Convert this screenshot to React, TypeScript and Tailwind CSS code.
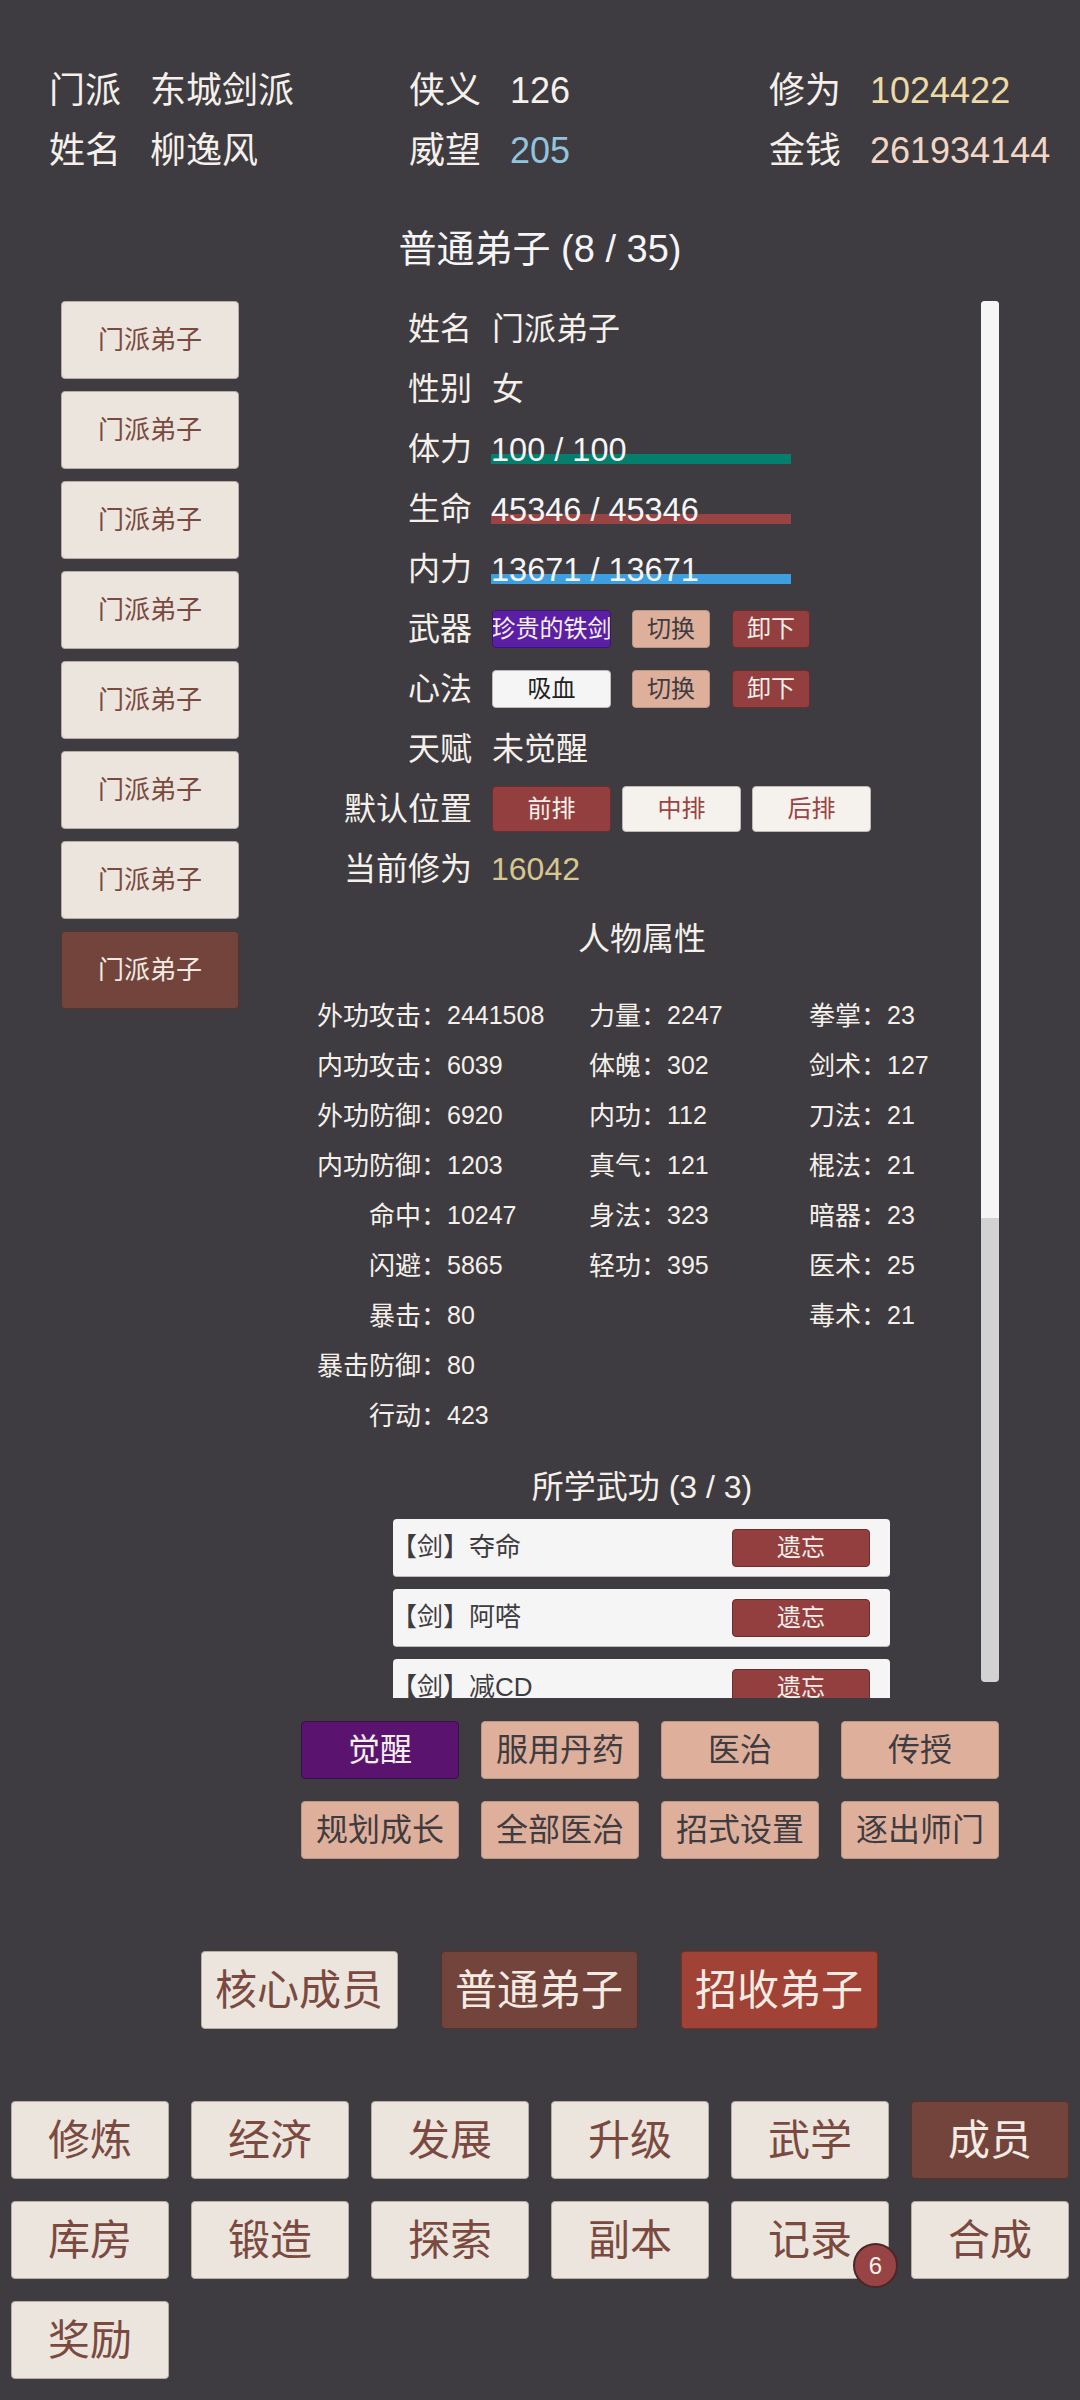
import React from 'react';

const font = { fontFamily: '"Liberation Sans", "Noto Sans CJK SC", sans-serif' };

const HEADER = [
  [
    { label: '门派', value: '东城剑派', color: 'text-[#f5f0ea]' },
    { label: '姓名', value: '柳逸风', color: 'text-[#f5f0ea]' },
  ],
  [
    { label: '侠义', value: '126', color: 'text-[#f5f0ea]' },
    { label: '威望', value: '205', color: 'text-[#93c4de]' },
  ],
  [
    { label: '修为', value: '1024422', color: 'text-[#ecd9a4]' },
    { label: '金钱', value: '261934144', color: 'text-[#f2d5c4]' },
  ],
];

const ATTR_1 = [
  ['外功攻击', '2441508'],
  ['内功攻击', '6039'],
  ['外功防御', '6920'],
  ['内功防御', '1203'],
  ['命中', '10247'],
  ['闪避', '5865'],
  ['暴击', '80'],
  ['暴击防御', '80'],
  ['行动', '423'],
];
const ATTR_2 = [
  ['力量', '2247'],
  ['体魄', '302'],
  ['内功', '112'],
  ['真气', '121'],
  ['身法', '323'],
  ['轻功', '395'],
];
const ATTR_3 = [
  ['拳掌', '23'],
  ['剑术', '127'],
  ['刀法', '21'],
  ['棍法', '21'],
  ['暗器', '23'],
  ['医术', '25'],
  ['毒术', '21'],
];

const NAV = ['修炼', '经济', '发展', '升级', '武学', '成员', '库房', '锻造', '探索', '副本', '记录', '合成', '奖励'];

const Row: React.FC<{ label: string; children: React.ReactNode }> = ({ label, children }) => (
  <div className="flex h-[46px] items-center">
    <div className="w-[232px] shrink-0 text-right text-[32px] text-[#f5f0ea]">{label}</div>
    <div className="ml-[20px] flex items-center">{children}</div>
  </div>
);

const Bar: React.FC<{ text: string; color: string }> = ({ text, color }) => (
  <div className="relative -ml-px h-[46px] w-[300px]">
    <div className={`absolute bottom-[8px] left-0 h-[10px] w-full ${color}`} />
    <div className="absolute top-[3px] left-0 text-[32.5px] leading-[42px] whitespace-nowrap text-[#f5f5f5]">{text}</div>
  </div>
);

const SmallBtn: React.FC<{ className: string; children: React.ReactNode }> = ({ className, children }) => (
  <div className={`flex h-[38px] items-center justify-center rounded-[4px] border text-[24px] whitespace-nowrap ${className}`}>
    {children}
  </div>
);

const AttrCol: React.FC<{ items: string[][]; labelW: string; width: string }> = ({ items, labelW, width }) => (
  <div className={`flex flex-col ${width}`}>
    {items.map(([k, v]) => (
      <div key={k} className="flex h-[50px] items-center text-[26px] whitespace-nowrap text-[#f5f0ea]">
        <div className={`shrink-0 text-right ${labelW}`}>{k}：</div>
        <div className="text-[25px]">{v}</div>
      </div>
    ))}
  </div>
);

const App: React.FC = () => {
  return (
    <div className="flex h-[2400px] w-[1080px] flex-col overflow-hidden bg-[#3e3c41]" style={font}>
      {/* top stats */}
      <div className="flex pt-[61px] pl-[49px]">
        {HEADER.map((col, i) => (
          <div key={i} className={i < 2 ? 'w-[360px]' : ''}>
            {col.map(r => (
              <div key={r.label} className="flex h-[60px] items-center text-[36px] whitespace-nowrap">
                <div className="w-[101px] text-[#f5f0ea]">{r.label}</div>
                <div className={r.color}>{r.value}</div>
              </div>
            ))}
          </div>
        ))}
      </div>

      <div className="mt-[41px] h-[79px] text-center text-[38px] leading-[54px] text-[#f5f5f5]">普通弟子 (8 / 35)</div>

      <div className="flex h-[1397px]">
        {/* disciple list */}
        <div className="ml-[61px] flex w-[178px] shrink-0 flex-col gap-[12px]">
          {Array.from({ length: 8 }).map((_, i) => (
            <div
              key={i}
              className={
                i === 7
                  ? 'flex h-[78px] items-center justify-center rounded-[4px] border border-[#55322c] bg-[#72443b] text-[26px] text-[#f3ebe3]'
                  : 'flex h-[78px] items-center justify-center rounded-[4px] border border-[#b5aca4] bg-[#ebe5de] text-[26px] text-[#7a4a40]'
              }
            >
              门派弟子
            </div>
          ))}
        </div>

        {/* detail panel */}
        <div className="relative ml-px flex-1 overflow-hidden">
          <div className="flex flex-col gap-[14px] pt-[5px]">
            <Row label="姓名"><span className="text-[32px] text-[#f5f0ea]">门派弟子</span></Row>
            <Row label="性别"><span className="text-[32px] text-[#f5f0ea]">女</span></Row>
            <Row label="体力"><Bar text="100 / 100" color="bg-[#047f6e]" /></Row>
            <Row label="生命"><Bar text="45346 / 45346" color="bg-[#994444]" /></Row>
            <Row label="内力"><Bar text="13671 / 13671" color="bg-[#3d9fe0]" /></Row>
            <Row label="武器">
              <SmallBtn className="w-[119px] overflow-hidden border-[#3b1570] bg-[#5b1fa6] text-[#f5f0ea]">珍贵的铁剑</SmallBtn>
              <SmallBtn className="ml-[21px] w-[78px] border-[#b99583] bg-[#deb09b] text-[#3e3c41]">切换</SmallBtn>
              <SmallBtn className="ml-[22px] w-[78px] border-[#6b2d2d] bg-[#943f3f] text-[#f5f0ea]">卸下</SmallBtn>
            </Row>
            <Row label="心法">
              <SmallBtn className="w-[119px] border-[#bbbbbb] bg-[#f5f5f5] text-[#222222]">吸血</SmallBtn>
              <SmallBtn className="ml-[21px] w-[78px] border-[#b99583] bg-[#deb09b] text-[#3e3c41]">切换</SmallBtn>
              <SmallBtn className="ml-[22px] w-[78px] border-[#6b2d2d] bg-[#943f3f] text-[#f5f0ea]">卸下</SmallBtn>
            </Row>
            <Row label="天赋"><span className="text-[32px] text-[#f5f0ea]">未觉醒</span></Row>
            <Row label="默认位置">
              <div className="flex gap-[11px]">
                <div className="flex h-[46px] w-[119px] items-center justify-center rounded-[4px] border border-[#6b2d2d] bg-[#943f3f] text-[24px] text-[#f5f0ea]">前排</div>
                <div className="flex h-[46px] w-[119px] items-center justify-center rounded-[4px] border border-[#bdb8b2] bg-[#f5f2ed] text-[24px] text-[#994444]">中排</div>
                <div className="flex h-[46px] w-[119px] items-center justify-center rounded-[4px] border border-[#bdb8b2] bg-[#f5f2ed] text-[24px] text-[#994444]">后排</div>
              </div>
            </Row>
            <Row label="当前修为"><span className="-ml-px text-[32px] text-[#d9c68c]">16042</span></Row>
          </div>

          <div className="mt-[24px] w-[804px] text-center text-[32px] leading-[46px] text-[#f5f0ea]">人物属性</div>

          <div className="mt-[29px] flex pl-[60px]">
            <AttrCol items={ATTR_1} labelW="w-[147px]" width="w-[289px]" />
            <AttrCol items={ATTR_2} labelW="w-[78px]" width="w-[220px]" />
            <AttrCol items={ATTR_3} labelW="w-[78px]" width="w-[150px]" />
          </div>

          <div className="mt-[23px] w-[804px] text-center text-[32px] leading-[46px] text-[#f5f0ea]">所学武功 (3 / 3)</div>

          <div className="mt-[9px] ml-[153px] flex w-[497px] flex-col gap-[12px]">
            {['夺命', '阿嗒', '减CD'].map(s => (
              <div key={s} className="flex h-[58px] items-center justify-between rounded-[4px] border-b border-[#bbbbbb] bg-[#f5f5f5] pr-[20px] text-[26px] text-[#3e3c41]">
                <span className="-ml-[2px]">【剑】{s}</span>
                <div className="flex h-[38px] w-[138px] items-center justify-center rounded-[4px] border border-[#6b2d2d] bg-[#943f3f] text-[24px] text-[#f5f0ea]">遗忘</div>
              </div>
            ))}
          </div>

          {/* scrollbar */}
          <div className="absolute top-0 left-[741px] h-[1381px] w-[18px] overflow-hidden rounded-[4px] bg-[#d2d2d2]">
            <div className="h-[917px] w-full bg-[#f5f5f5]" />
          </div>
        </div>
      </div>

      {/* action buttons */}
      <div className="mt-[23px] ml-[301px] grid w-[698px] grid-cols-4 gap-[22px]">
        {['觉醒', '服用丹药', '医治', '传授', '规划成长', '全部医治', '招式设置', '逐出师门'].map((t, i) => (
          <div
            key={t}
            className={
              i === 0
                ? 'flex h-[58px] items-center justify-center rounded-[4px] border border-[#36104a] bg-[#5a1470] text-[32px] text-[#f5f0ea]'
                : 'flex h-[58px] items-center justify-center rounded-[4px] border border-[#b99583] bg-[#deb09b] text-[32px] text-[#3e3c41]'
            }
          >
            {t}
          </div>
        ))}
      </div>

      {/* sub tabs */}
      <div className="mt-[92px] flex justify-center gap-[43px] pr-[2px]">
        <div className="flex h-[78px] w-[197px] items-center justify-center rounded-[4px] border border-[#b5aca4] bg-[#ebe5de] text-[42px] text-[#7a4a40]">核心成员</div>
        <div className="flex h-[78px] w-[197px] items-center justify-center rounded-[4px] border border-[#55322c] bg-[#72443b] text-[42px] text-[#f3ebe3]">普通弟子</div>
        <div className="flex h-[78px] w-[197px] items-center justify-center rounded-[4px] border border-[#7a3026] bg-[#a04236] text-[42px] text-[#f3ebe3]">招收弟子</div>
      </div>

      {/* bottom nav */}
      <div className="mt-[72px] ml-[11px] grid w-[1058px] grid-cols-6 gap-[22px]">
        {NAV.map(t => (
          <div
            key={t}
            className={
              t === '成员'
                ? 'relative flex h-[78px] items-center justify-center rounded-[4px] border border-[#55322c] bg-[#72443b] text-[42px] text-[#f3ebe3]'
                : 'relative flex h-[78px] items-center justify-center rounded-[4px] border border-[#b5aca4] bg-[#ebe5de] text-[42px] text-[#7a4a40]'
            }
          >
            {t}
            {t === '记录' && (
              <div className="absolute top-[41px] left-[121px] flex h-[45px] w-[45px] items-center justify-center rounded-full border-2 border-[#4a2828] bg-[#994444] text-[24px] text-[#f5f0ea]">6</div>
            )}
          </div>
        ))}
      </div>
    </div>
  );
};

export default App;
